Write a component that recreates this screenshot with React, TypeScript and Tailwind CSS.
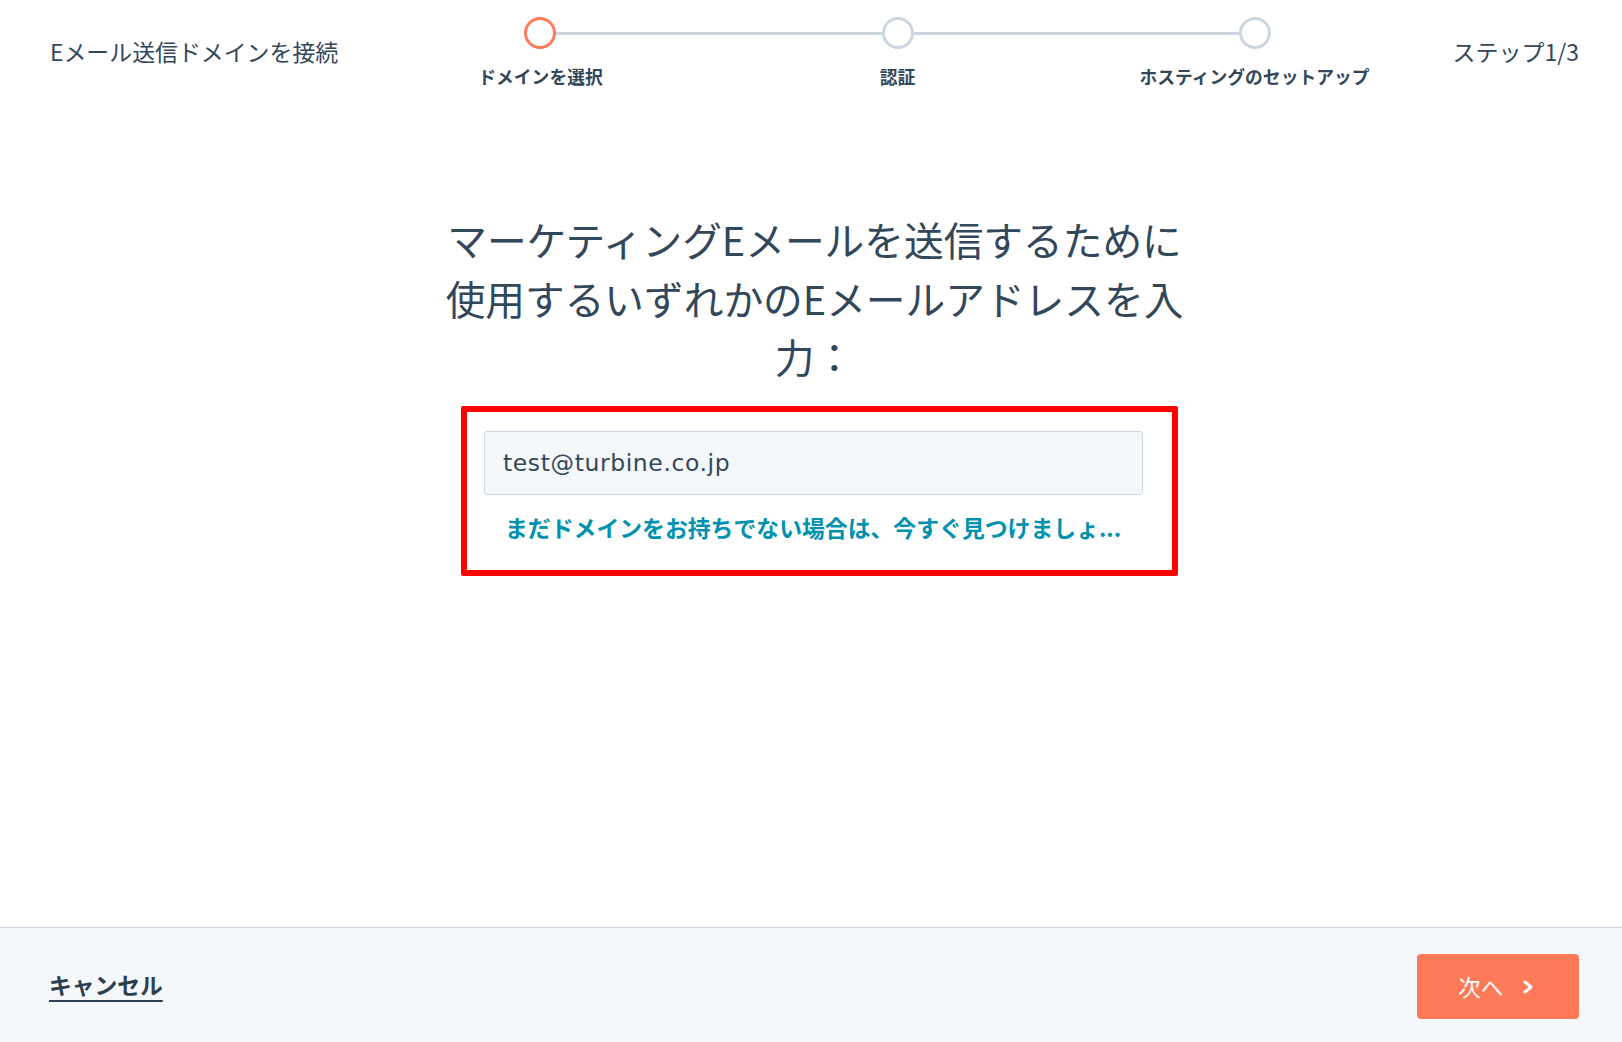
export default function App() {
  const steps = ['ドメインを選択', '認証', 'ホスティングのセットアップ'];

  return (
    <div className="flex min-h-screen flex-col bg-white font-['Noto_Sans_CJK_JP',sans-serif] text-[#33475b]">
      {/* Header with stepper */}
      <header className="flex h-[100px] shrink-0 items-start pl-[50px] pr-[43px]">
        <div className="w-[312px] shrink-0 pt-[35px] text-[22.9px] leading-[32px]">Eメール送信ドメインを接続</div>

        <div className="w-[1071px] shrink-0 pt-[17px]">
          <div className="flex items-center px-[162px]">
            <span className="h-8 w-8 shrink-0 rounded-full border-[3px] border-[#ff7a59] bg-white" />
            <span className="h-[3px] flex-1 bg-[#cbd6e2]" />
            <span className="h-8 w-8 shrink-0 rounded-full border-[3px] border-[#cbd6e2] bg-white" />
            <span className="h-[3px] flex-1 bg-[#cbd6e2]" />
            <span className="h-8 w-8 shrink-0 rounded-full border-[3px] border-[#cbd6e2] bg-white" />
          </div>
          <div className="mt-[15px] grid grid-cols-3 text-center text-[17.8px] font-bold leading-6">
            {steps.map(s => (
              <span key={s}>{s}</span>
            ))}
          </div>
        </div>

        <div className="flex-1 pt-[35px] text-right text-[23px] leading-[32px]">ステップ1/3</div>
      </header>

      {/* Main content */}
      <main className="flex flex-1 flex-col items-center pt-[110px]">
        <h1 className="ml-[7px] whitespace-nowrap text-center text-[39.7px] font-normal leading-[58.5px]">
          マーケティングEメールを送信するために
          <br />
          使用するいずれかのEメールアドレスを入
          <br />
          力：
        </h1>

        <div className="ml-[17px] mt-5 w-[717px] rounded-[2px] border-[6px] border-[#ff0000] pb-[27px] pl-[17px] pr-[29px] pt-[19px]">
          <input
            readOnly
            value="test@turbine.co.jp"
            className="block h-[64px] w-[659px] rounded-[3px] border border-[#cbd6e2] bg-[#f5f8fa] px-[18px] font-['DejaVu_Sans',sans-serif] text-[23.5px] tracking-[0.6px] text-[#33475b] outline-none"
          />
          <p className="mt-4 w-[659px] whitespace-nowrap pl-[21px] text-[22.85px] font-bold leading-8 text-[#0091ae]">
            まだドメインをお持ちでない場合は、今すぐ見つけましょ...
          </p>
        </div>
      </main>

      {/* Footer */}
      <footer className="flex h-[115px] shrink-0 items-center justify-between border-t border-[#cbd6e2] bg-[#f5f8fa] pl-[49px] pr-[43px]">
        <a href="#" className="text-[22.75px] font-bold leading-8 text-[#2d3e50] underline decoration-2 underline-offset-[6px]">
          キャンセル
        </a>
        <button className="mt-[3px] flex h-[65px] w-[162px] items-center rounded-[4px] bg-[#ff7a59] pl-[41px] text-[22.75px] leading-8 text-white">
          次へ
          <svg className="ml-[19px]" width="10" height="14" viewBox="0 0 10 14" fill="none">
            <polyline points="2,2 8,7 2,12" stroke="white" strokeWidth="3" strokeLinecap="round" strokeLinejoin="round" />
          </svg>
        </button>
      </footer>
    </div>
  );
}
